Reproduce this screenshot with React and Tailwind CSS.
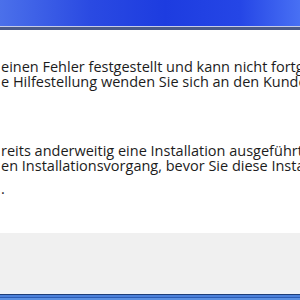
export default function App() {
  const lines = [
    { text: "einen Fehler festgestellt und kann nicht fortgesetzt werden.", mt: "mt-[29px]" },
    { text: "e Hilfestellung wenden Sie sich an den Kundendienst.", mt: "mt-0" },
    { text: "reits anderweitig eine Installation ausgeführt wird.", mt: "mt-[54px]" },
    { text: "en Installationsvorgang, bevor Sie diese Installation starten.", mt: "mt-0" },
    { text: ".", mt: "mt-[8px]" },
  ];

  return (
    <div className="w-[300px] h-[300px] overflow-hidden flex flex-col bg-white font-['Open_Sans',sans-serif]">
      {/* title bar */}
      <div className="h-[26px] shrink-0 bg-[linear-gradient(to_right,#4b70ea,#2a4ae2_30%,#1d3ce0_55%,#2546e6_80%,#4870f4)]"></div>
      <div className="h-px shrink-0 bg-[#c4cbe8]"></div>
      <div className="h-[3px] shrink-0 bg-[#4b5a88]"></div>

      {/* message */}
      <div className="flex-1 overflow-hidden pl-px text-[14.5px] leading-[15px] text-[#1c1c1c]">
        {lines.map((l, i) => (
          <p key={i} className={`${l.mt} whitespace-nowrap`}>{l.text}</p>
        ))}
      </div>

      {/* footer */}
      <div className="h-[57px] shrink-0 bg-[#f0f0f0]"></div>
      <div className="h-[4px] shrink-0 bg-[#eef2f8]"></div>
      <div className="h-px shrink-0 bg-[#1c3d7a]"></div>
      <div className="h-[2px] shrink-0 bg-[#4a80dc]"></div>
      <div className="h-px shrink-0 bg-[#2a5cb8]"></div>
      <div className="h-[2px] shrink-0 bg-[#5a90e4]"></div>
    </div>
  );
}
